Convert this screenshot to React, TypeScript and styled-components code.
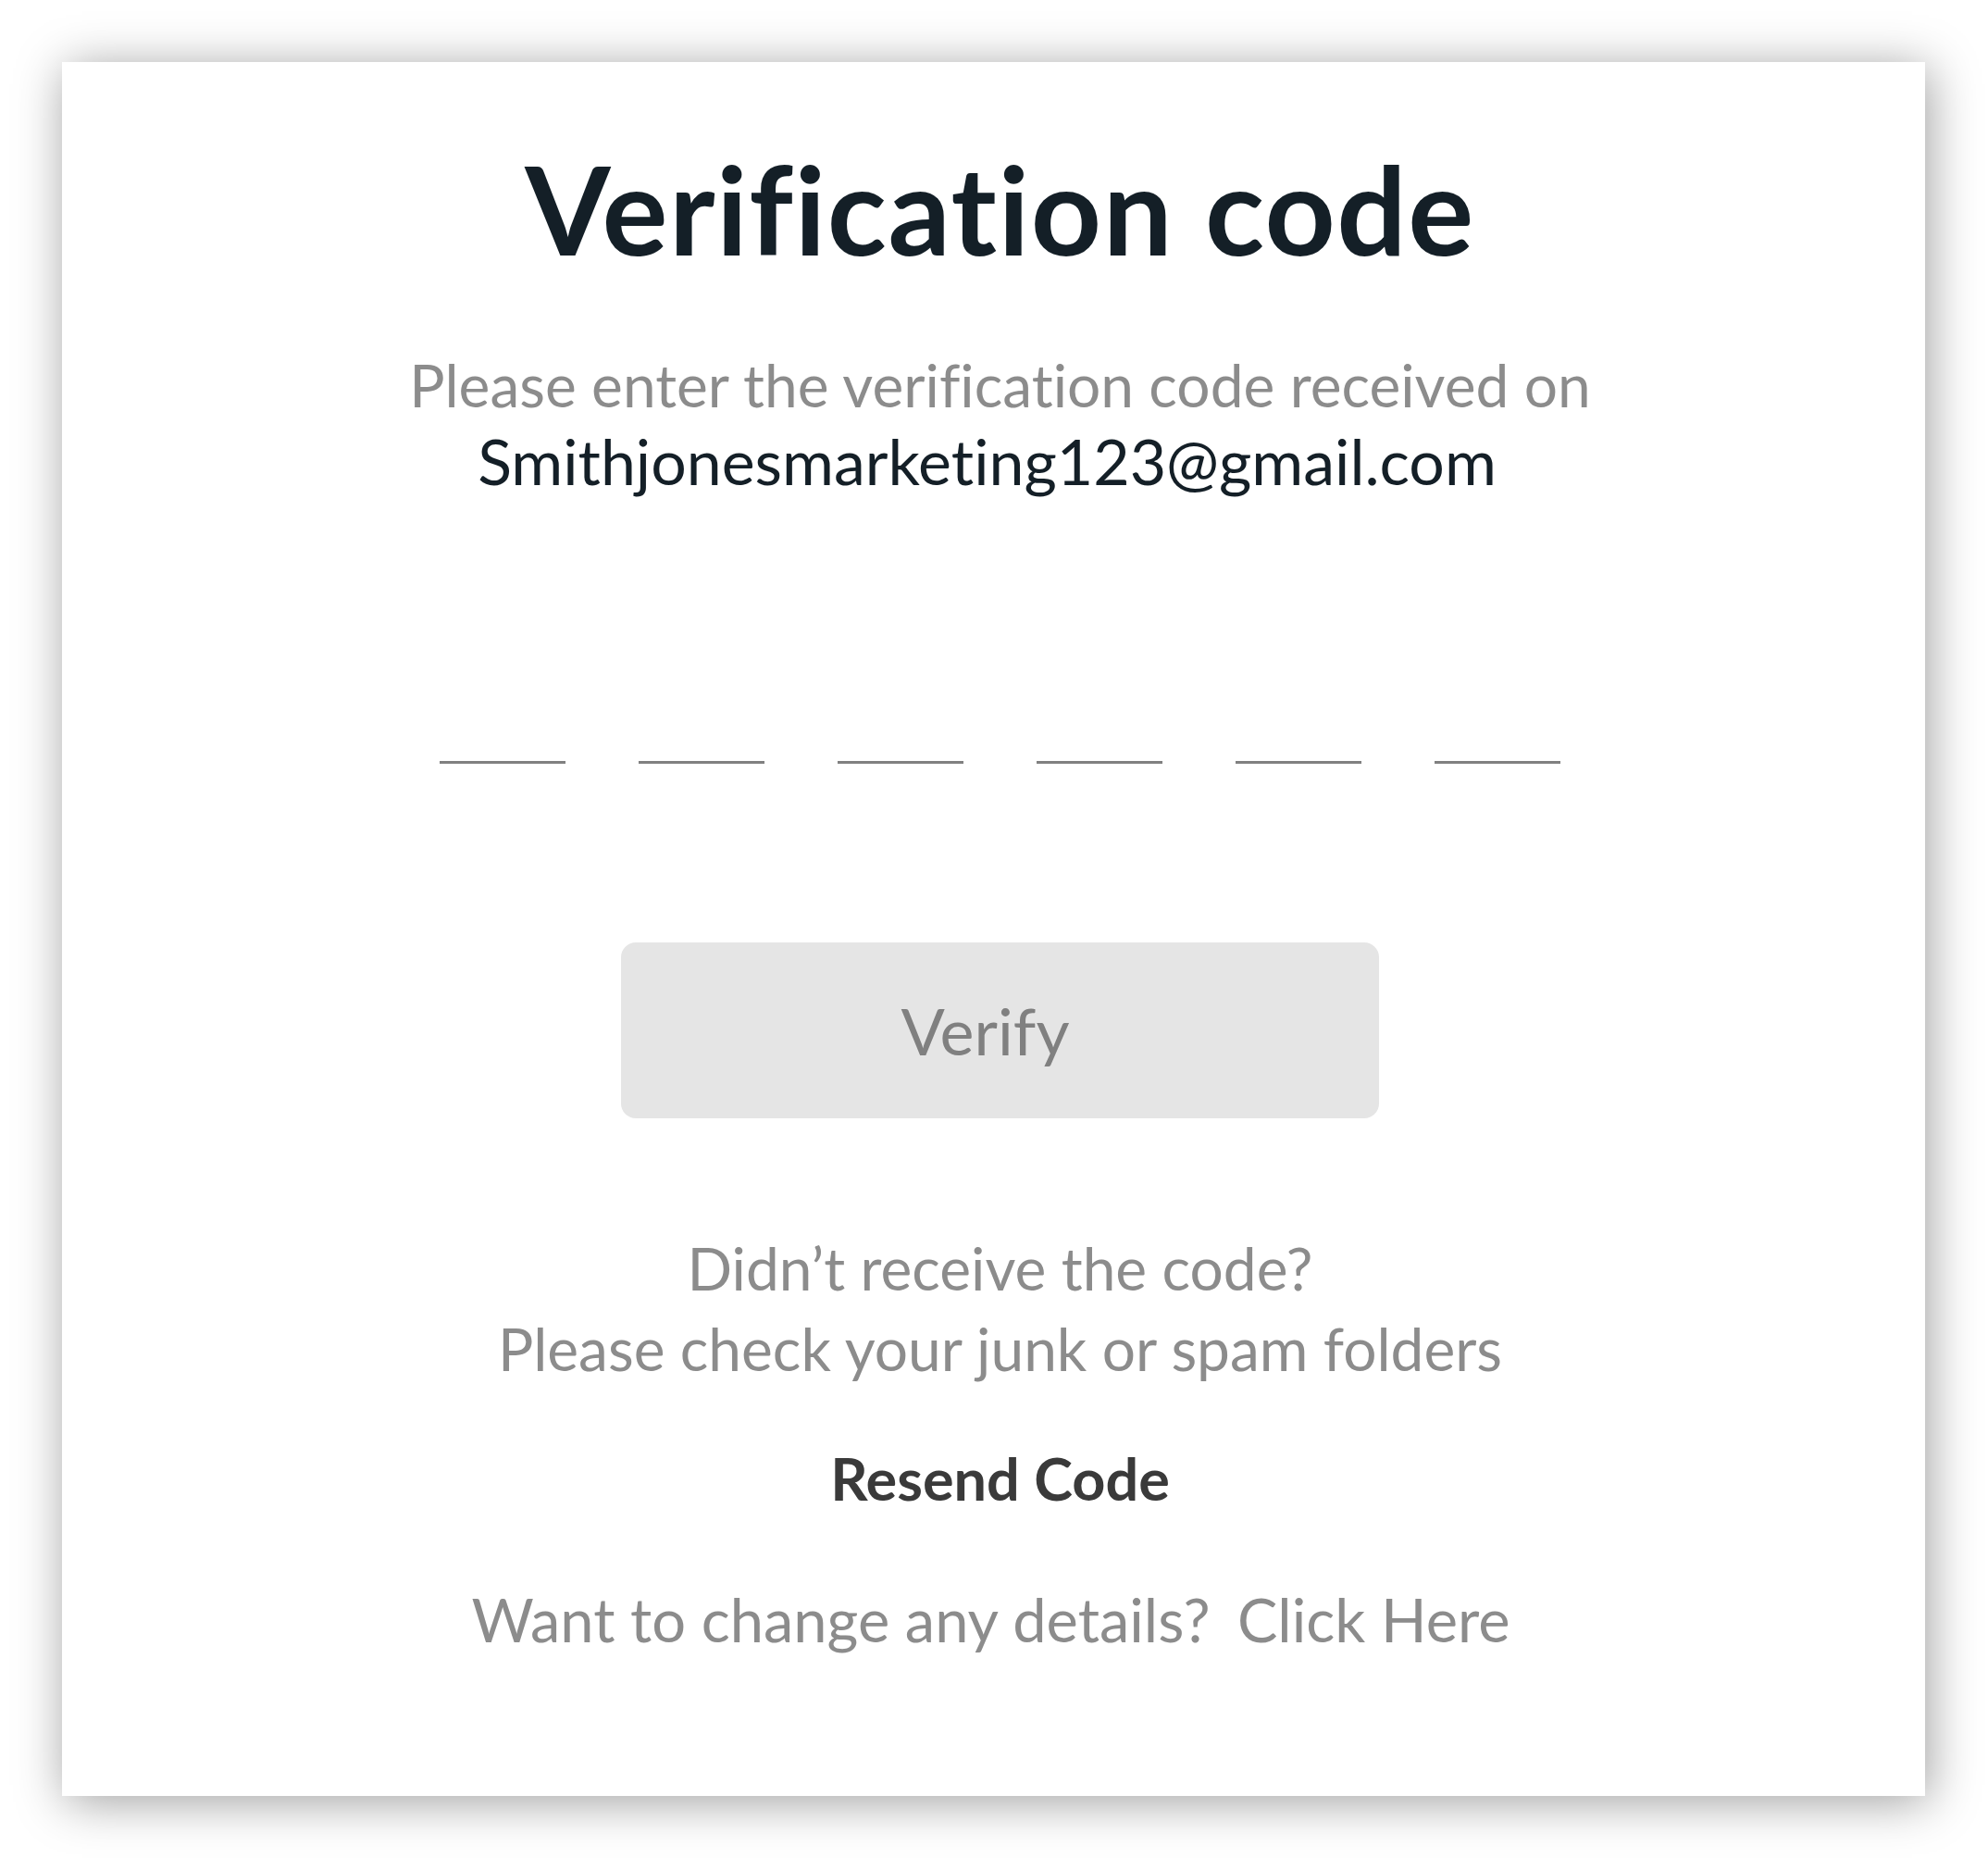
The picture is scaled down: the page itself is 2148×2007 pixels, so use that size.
import React from "react";
import styled, { createGlobalStyle } from "styled-components";

const GlobalStyle = createGlobalStyle`
    html, body {
        margin: 0;
        padding: 0;
        background: #ffffff;
    }
    body {
        font-family: Lato, "Open Sans", sans-serif;
        font-variant-ligatures: none;
    }
`;

const CODE_LENGTH = 6;

const App = () => {
    const slots = Array.from({ length: CODE_LENGTH });

    return (
        <Page>
            <GlobalStyle />
            <Card>
                <Title>Verification code</Title>
                <Intro>
                    Please enter the verification code received on
                    <Email>Smithjonesmarketing123@gmail.com</Email>
                </Intro>
                <CodeRow>
                    {slots.map((_, index) => (
                        <CodeSlot key={index} />
                    ))}
                </CodeRow>
                <VerifyButton type="button" disabled>
                    Verify
                </VerifyButton>
                <Help>
                    Didn’t receive the code?
                    <br />
                    Please check your junk or spam folders
                </Help>
                <Resend>Resend Code</Resend>
                <Change>
                    Want to change any details?
                    <ChangeLink>Click Here</ChangeLink>
                </Change>
            </Card>
        </Page>
    );
};

export default App;

const Page = styled.div`
    padding: 67px;
    width: 2148px;
    height: 2007px;
    box-sizing: border-box;
`;

const Card = styled.div`
    width: 2013px;
    height: 1873px;
    box-sizing: border-box;
    background: #ffffff;
    box-shadow: 4px 6px 50px rgba(0, 0, 0, 0.38);
    padding: 92px 0 0 14px;
    display: flex;
    flex-direction: column;
    align-items: center;
    text-align: center;
`;

const Title = styled.h1`
    margin: 0;
    font-family: Lato, sans-serif;
    font-size: 133px;
    line-height: 132px;
    font-weight: 700;
    letter-spacing: 1.5px;
    color: #141f27;
`;

const Intro = styled.p`
    margin: 84px 0 0;
    font-size: 64px;
    line-height: 82px;
    color: #8c8c8c;
`;

const Email = styled.span`
    display: block;
    padding-right: 28px;
    font-size: 68px;
    color: #141f27;
`;

const CodeRow = styled.div`
    margin-top: 283px;
    display: flex;
    gap: 79px;
`;

const CodeSlot = styled.div`
    width: 136px;
    height: 3px;
    background: #808080;
`;

const VerifyButton = styled.button`
    margin-top: 193px;
    width: 819px;
    height: 190px;
    padding: 0 32px 0 0;
    border: none;
    border-radius: 16px;
    background: #e5e5e5;
    color: #808080;
    font-family: Lato, sans-serif;
    font-size: 70px;
    cursor: default;
`;

const Help = styled.p`
    margin: 118px 0 0;
    font-size: 64px;
    line-height: 87px;
    color: #8c8c8c;
`;

const Resend = styled.a`
    margin-top: 53px;
    font-size: 63px;
    line-height: 87px;
    font-weight: 700;
    color: #3a3a3a;
    cursor: pointer;
`;

const Change = styled.p`
    margin: 66px 0 0;
    padding-right: 20px;
    font-size: 65px;
    line-height: 87px;
    color: #8c8c8c;
`;

const ChangeLink = styled.a`
    margin-left: 0.45em;
    color: #8c8c8c;
    cursor: pointer;
`;
